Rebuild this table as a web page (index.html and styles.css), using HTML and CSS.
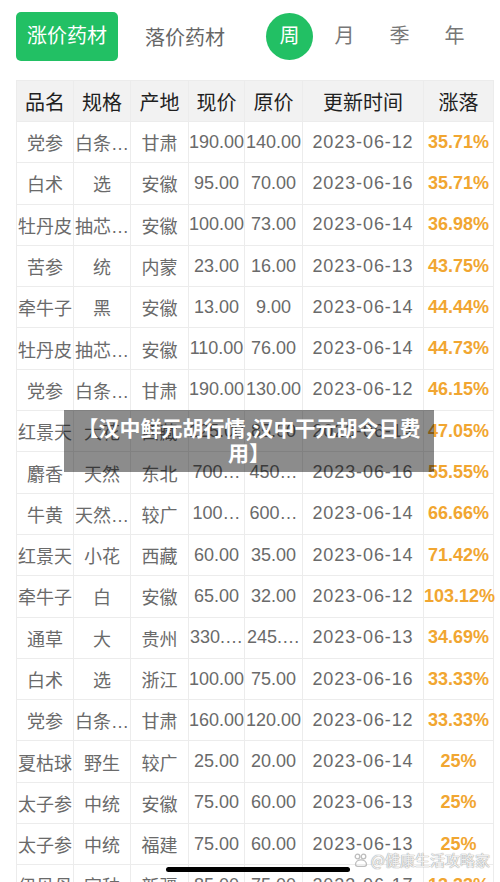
FILE: index.html
```html
<!DOCTYPE html>
<html lang="zh-CN">
<head>
  <meta charset="UTF-8">
  <meta name="viewport" content="width=device-width, initial-scale=1.0">
  <title>药材行情</title>
  <link rel="stylesheet" href="styles.css">
</head>
<body>

  <div class="page">
    <div class="tabs">
      <div class="tab-main">涨价药材</div>
      <div class="tab-sub">落价药材</div>
      <div class="period">
        <span class="period-item active">周</span>
        <span class="period-item">月</span>
        <span class="period-item">季</span>
        <span class="period-item">年</span>
      </div>
    </div>

    <table class="price-table">
      <colgroup>
        <col class="c-name">
        <col class="c-spec">
        <col class="c-area">
        <col class="c-now">
        <col class="c-old">
        <col class="c-date">
        <col class="c-rate">
      </colgroup>
      <thead>
        <tr>
          <th>品名</th>
          <th>规格</th>
          <th>产地</th>
          <th>现价</th>
          <th>原价</th>
          <th>更新时间</th>
          <th>涨落</th>
        </tr>
      </thead>
      <tbody>
        <tr><td>党参</td><td>白条…</td><td>甘肃</td><td>190.00</td><td>140.00</td><td class="date">2023-06-12</td><td class="rate">35.71%</td></tr>
        <tr><td>白术</td><td>选</td><td>安徽</td><td>95.00</td><td>70.00</td><td class="date">2023-06-16</td><td class="rate">35.71%</td></tr>
        <tr><td>牡丹皮</td><td>抽芯…</td><td>安徽</td><td>100.00</td><td>73.00</td><td class="date">2023-06-14</td><td class="rate">36.98%</td></tr>
        <tr><td>苦参</td><td>统</td><td>内蒙</td><td>23.00</td><td>16.00</td><td class="date">2023-06-13</td><td class="rate">43.75%</td></tr>
        <tr><td>牵牛子</td><td>黑</td><td>安徽</td><td>13.00</td><td>9.00</td><td class="date">2023-06-14</td><td class="rate">44.44%</td></tr>
        <tr><td>牡丹皮</td><td>抽芯…</td><td>安徽</td><td>110.00</td><td>76.00</td><td class="date">2023-06-14</td><td class="rate">44.73%</td></tr>
        <tr><td>党参</td><td>白条…</td><td>甘肃</td><td>190.00</td><td>130.00</td><td class="date">2023-06-12</td><td class="rate">46.15%</td></tr>
        <tr><td>红景天</td><td>大花</td><td>西藏</td><td>125.00</td><td>85.00</td><td class="date">2023-06-14</td><td class="rate">47.05%</td></tr>
        <tr><td>麝香</td><td>天然</td><td>东北</td><td>700…</td><td>450…</td><td class="date">2023-06-16</td><td class="rate">55.55%</td></tr>
        <tr><td>牛黄</td><td>天然…</td><td>较广</td><td>100…</td><td>600…</td><td class="date">2023-06-14</td><td class="rate">66.66%</td></tr>
        <tr><td>红景天</td><td>小花</td><td>西藏</td><td>60.00</td><td>35.00</td><td class="date">2023-06-14</td><td class="rate">71.42%</td></tr>
        <tr><td>牵牛子</td><td>白</td><td>安徽</td><td>65.00</td><td>32.00</td><td class="date">2023-06-12</td><td class="rate">103.12%</td></tr>
        <tr><td>通草</td><td>大</td><td>贵州</td><td>330.…</td><td>245.…</td><td class="date">2023-06-13</td><td class="rate">34.69%</td></tr>
        <tr><td>白术</td><td>选</td><td>浙江</td><td>100.00</td><td>75.00</td><td class="date">2023-06-16</td><td class="rate">33.33%</td></tr>
        <tr><td>党参</td><td>白条…</td><td>甘肃</td><td>160.00</td><td>120.00</td><td class="date">2023-06-12</td><td class="rate">33.33%</td></tr>
        <tr><td>夏枯球</td><td>野生</td><td>较广</td><td>25.00</td><td>20.00</td><td class="date">2023-06-14</td><td class="rate">25%</td></tr>
        <tr><td>太子参</td><td>中统</td><td>安徽</td><td>75.00</td><td>60.00</td><td class="date">2023-06-13</td><td class="rate">25%</td></tr>
        <tr><td>太子参</td><td>中统</td><td>福建</td><td>75.00</td><td>60.00</td><td class="date">2023-06-13</td><td class="rate">25%</td></tr>
        <tr><td>伊贝母</td><td>家种</td><td>新疆</td><td>85.00</td><td>75.00</td><td class="date">2023-06-17</td><td class="rate">13.33%</td></tr>
      </tbody>
    </table>
  </div>

  <div class="title-banner">【汉中鲜元胡行情,汉中干元胡今日费用】</div>

  <div class="watermark">
    <svg width="16" height="16" viewBox="0 0 16 16" fill="none" stroke="#bdbdbd" stroke-width="1.3">
      <circle cx="4.5" cy="4.5" r="2.3"/>
      <circle cx="10.5" cy="4.5" r="2.3"/>
      <path d="M2.5 12.5c0-2.6 2.4-4.6 5.5-4.6s5.5 2 5.5 4.6c0 1.2-1 1.8-2.2 1.8H4.7c-1.2 0-2.2-.6-2.2-1.8z"/>
    </svg>
    <span>@健康生活攻略家</span>
  </div>

  <div class="home-bar"></div>

</body>
</html>
```

FILE: styles.css
```css
body {
  margin: 0;
  padding: 0;
  background: #fff;
  font-family: "Liberation Sans", "Noto Sans CJK SC", sans-serif;
  height: 882px;
  overflow: hidden;
  position: relative;
}

.page {
  padding: 12px 7px 0 16px;
}

/* 顶部切换 */
.tabs {
  display: flex;
  align-items: center;
  height: 49px;
  margin-bottom: 19px;
}

.tab-main {
  width: 102px;
  height: 49px;
  line-height: 49px;
  text-align: center;
  background-color: #22c064;
  color: #fff;
  font-size: 20px;
  border-radius: 5px;
}

.tab-sub {
  margin-left: 27px;
  font-size: 20px;
  color: #666;
}

.period {
  display: flex;
  gap: 8px;
  margin-left: 41px;
}

.period-item {
  width: 47px;
  height: 47px;
  line-height: 47px;
  text-align: center;
  font-size: 20px;
  color: #777;
  border-radius: 50%;
}

.period-item.active {
  background-color: #22c064;
  color: #fff;
}

/* 表格 */
.price-table {
  border-collapse: collapse;
  table-layout: fixed;
  width: 477px;
}

.price-table th,
.price-table td {
  border: 1px solid #ececec;
  padding: 0;
  text-align: center;
  white-space: nowrap;
}

.price-table th {
  height: 40px;
  background-color: #f2f2f2;
  font-size: 20px;
  font-weight: normal;
  color: #1f1f1f;
}

.price-table td {
  height: 40.3px;
  font-size: 18px;
  color: #6a6a6a;
}

.c-name { width: 57px; }
.c-spec { width: 57px; }
.c-area { width: 58px; }
.c-now { width: 56px; }
.c-old { width: 58px; }
.c-date { width: 121px; }
.c-rate { width: 70px; }

.price-table td.date {
  letter-spacing: 0.9px;
}

.price-table td.rate {
  color: #f1a631;
  font-weight: bold;
}

/* 标题遮罩 */
.title-banner {
  position: absolute;
  top: 410px;
  left: 64px;
  width: 370px;
  height: 62px;
  padding: 5px 9px 0;
  box-sizing: border-box;
  background: rgba(0, 0, 0, 0.45);
  color: #fff;
  font-family: "Noto Sans CJK SC", sans-serif;
  font-size: 21px;
  font-weight: bold;
  line-height: 25px;
  text-align: center;
}

.watermark {
  position: absolute;
  right: 10px;
  bottom: 12px;
  display: flex;
  align-items: center;
  gap: 2px;
  font-family: "Noto Sans CJK SC", sans-serif;
  font-size: 15px;
  color: rgba(255, 255, 255, 0.85);
  text-shadow: 0 0 1px #9a9a9a, 0 0 1px #9a9a9a;
}

.home-bar {
  position: absolute;
  left: 166px;
  bottom: 10px;
  width: 184px;
  height: 5px;
  border-radius: 3px;
  background: #000;
}
```
